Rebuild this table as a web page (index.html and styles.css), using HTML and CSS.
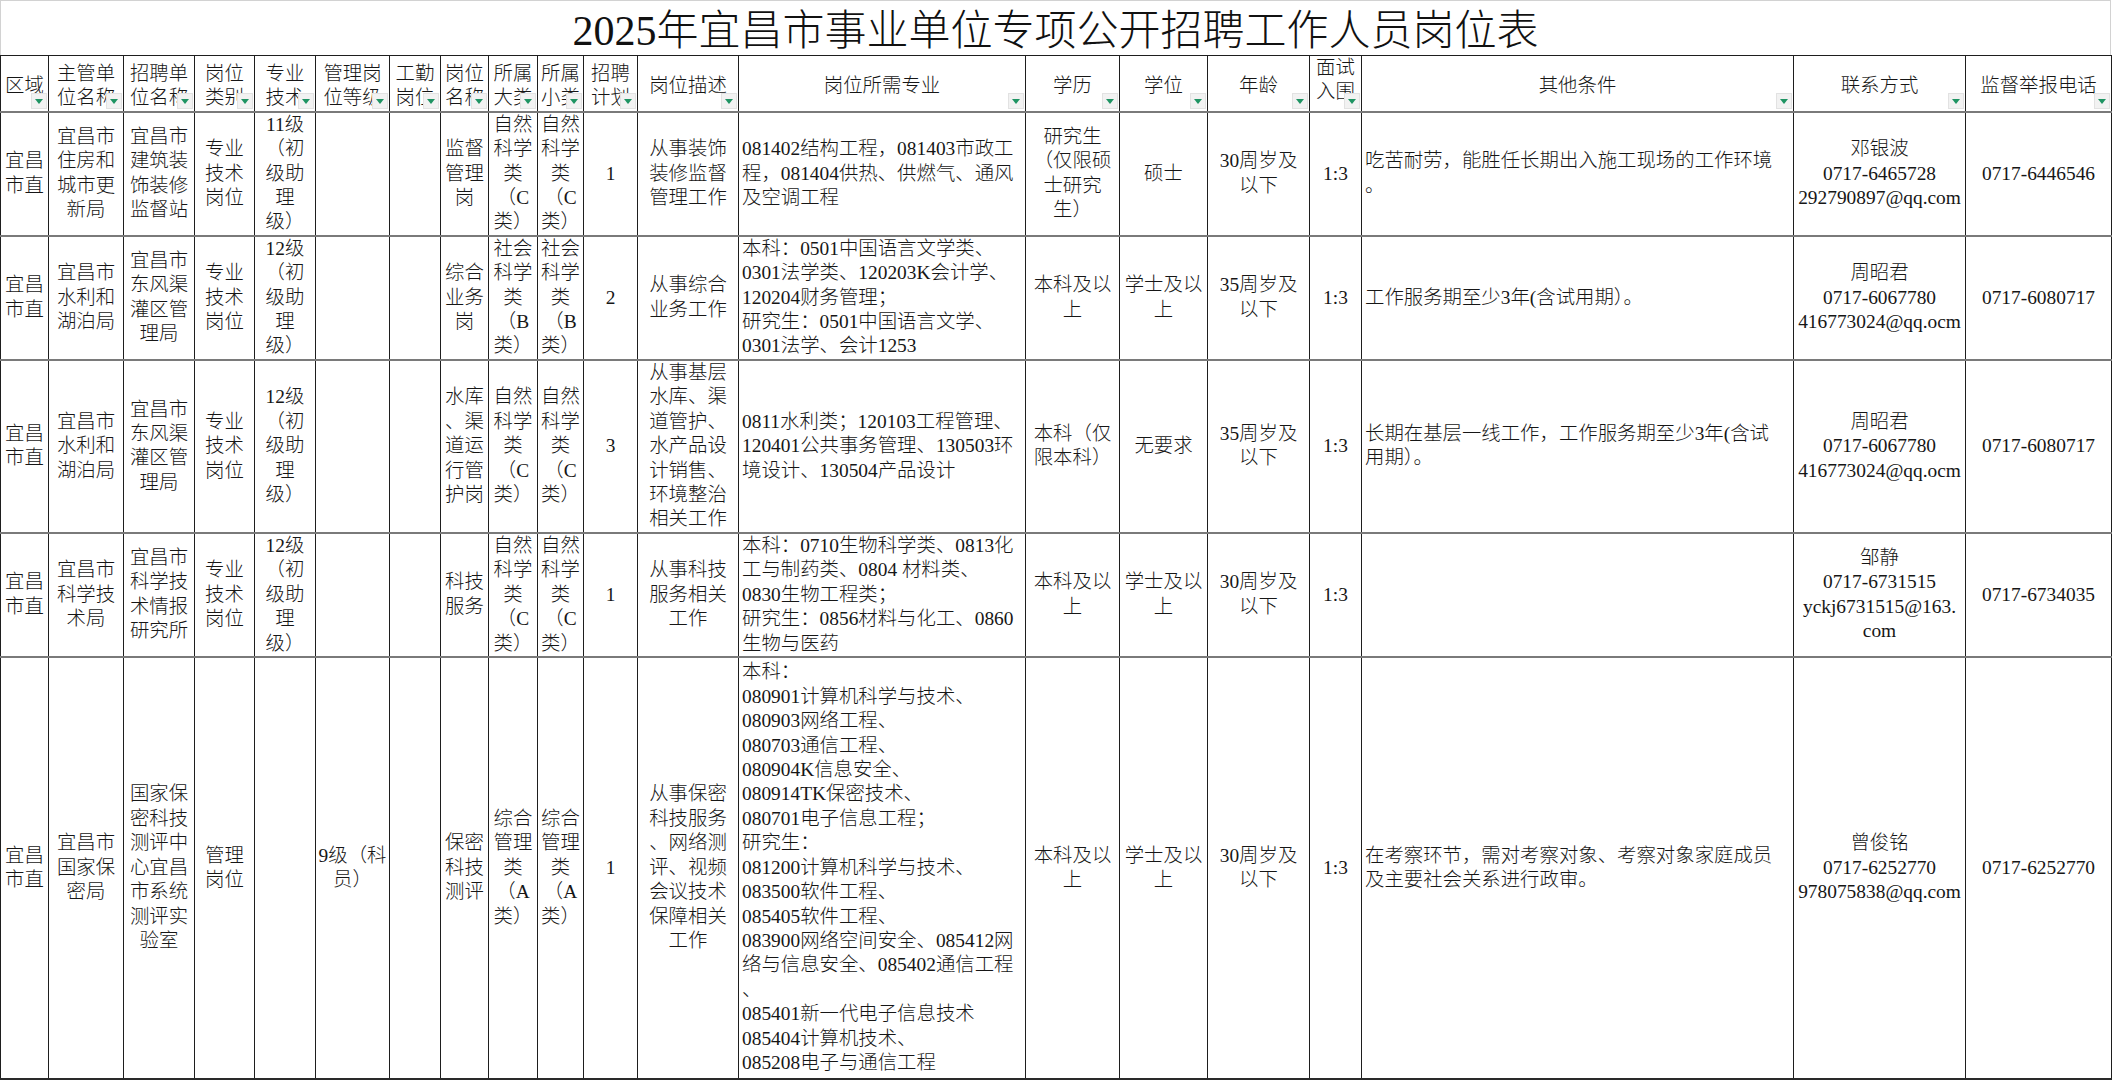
FILE: index.html
```html
<!DOCTYPE html>
<html lang="zh-CN">
<head>
<meta charset="utf-8">
<title>2025年宜昌市事业单位专项公开招聘工作人员岗位表</title>
<link rel="stylesheet" href="styles.css">
</head>
<body>
<div class="title">2025年宜昌市事业单位专项公开招聘工作人员岗位表</div>
<table class="sheet">
  <colgroup>
    <col class="w48"><col class="w75"><col class="w71"><col class="w60"><col class="w61">
    <col class="w74"><col class="w51"><col class="w48"><col class="w49"><col class="w46">
    <col class="w54"><col class="w101"><col class="w287"><col class="w94"><col class="w88">
    <col class="w102"><col class="w52"><col class="w432"><col class="w172"><col class="w146">
  </colgroup>
  <thead>
    <tr class="head">
      <th>区域<span class="fbtn"></span></th>
      <th>主管单<br>位名称<span class="fbtn"></span></th>
      <th>招聘单<br>位名称<span class="fbtn"></span></th>
      <th>岗位<br>类别<span class="fbtn"></span></th>
      <th>专业<br>技术<span class="fbtn"></span></th>
      <th>管理岗<br>位等级<span class="fbtn"></span></th>
      <th>工勤<br>岗位<span class="fbtn"></span></th>
      <th>岗位<br>名称<span class="fbtn"></span></th>
      <th>所属<br>大类<span class="fbtn"></span></th>
      <th>所属<br>小类<span class="fbtn"></span></th>
      <th>招聘<br>计划<span class="fbtn"></span></th>
      <th>岗位描述<span class="fbtn"></span></th>
      <th>岗位所需专业<span class="fbtn"></span></th>
      <th>学历<span class="fbtn"></span></th>
      <th>学位<span class="fbtn"></span></th>
      <th>年龄<span class="fbtn"></span></th>
      <th class="top">面试<br>入围<span class="fbtn"></span></th>
      <th>其他条件<span class="fbtn"></span></th>
      <th>联系方式<span class="fbtn"></span></th>
      <th>监督举报电话<span class="fbtn"></span></th>
    </tr>
  </thead>
  <tbody>
    <tr class="r1">
      <td>宜昌<br>市直</td>
      <td>宜昌市<br>住房和<br>城市更<br>新局</td>
      <td>宜昌市<br>建筑装<br>饰装修<br>监督站</td>
      <td>专业<br>技术<br>岗位</td>
      <td>11级<br>（初<br>级助<br>理<br>级）</td>
      <td></td>
      <td></td>
      <td>监督<br>管理<br>岗</td>
      <td>自然<br>科学<br>类<br>（C<br>类）</td>
      <td>自然<br>科学<br>类<br>（C<br>类）</td>
      <td>1</td>
      <td>从事装饰<br>装修监督<br>管理工作</td>
      <td class="left">081402结构工程，081403市政工<br>程，081404供热、供燃气、通风<br>及空调工程</td>
      <td>研究生<br>（仅限硕<br>士研究<br>生）</td>
      <td>硕士</td>
      <td>30周岁及<br>以下</td>
      <td>1:3</td>
      <td class="left">吃苦耐劳，能胜任长期出入施工现场的工作环境<br>。</td>
      <td>邓银波<br>0717-6465728<br>292790897@qq.com</td>
      <td>0717-6446546</td>
    </tr>
    <tr class="r2">
      <td>宜昌<br>市直</td>
      <td>宜昌市<br>水利和<br>湖泊局</td>
      <td>宜昌市<br>东风渠<br>灌区管<br>理局</td>
      <td>专业<br>技术<br>岗位</td>
      <td>12级<br>（初<br>级助<br>理<br>级）</td>
      <td></td>
      <td></td>
      <td>综合<br>业务<br>岗</td>
      <td>社会<br>科学<br>类<br>（B<br>类）</td>
      <td>社会<br>科学<br>类<br>（B<br>类）</td>
      <td>2</td>
      <td>从事综合<br>业务工作</td>
      <td class="left">本科：0501中国语言文学类、<br>0301法学类、120203K会计学、<br>120204财务管理；<br>研究生：0501中国语言文学、<br>0301法学、会计1253</td>
      <td>本科及以<br>上</td>
      <td>学士及以<br>上</td>
      <td>35周岁及<br>以下</td>
      <td>1:3</td>
      <td class="left">工作服务期至少3年(含试用期）。</td>
      <td>周昭君<br>0717-6067780<br>416773024@qq.ocm</td>
      <td>0717-6080717</td>
    </tr>
    <tr class="r3">
      <td>宜昌<br>市直</td>
      <td>宜昌市<br>水利和<br>湖泊局</td>
      <td>宜昌市<br>东风渠<br>灌区管<br>理局</td>
      <td>专业<br>技术<br>岗位</td>
      <td>12级<br>（初<br>级助<br>理<br>级）</td>
      <td></td>
      <td></td>
      <td>水库<br>、渠<br>道运<br>行管<br>护岗</td>
      <td>自然<br>科学<br>类<br>（C<br>类）</td>
      <td>自然<br>科学<br>类<br>（C<br>类）</td>
      <td>3</td>
      <td>从事基层<br>水库、渠<br>道管护、<br>水产品设<br>计销售、<br>环境整治<br>相关工作</td>
      <td class="left">0811水利类；120103工程管理、<br>120401公共事务管理、130503环<br>境设计、130504产品设计</td>
      <td>本科（仅<br>限本科）</td>
      <td>无要求</td>
      <td>35周岁及<br>以下</td>
      <td>1:3</td>
      <td class="left">长期在基层一线工作，工作服务期至少3年(含试<br>用期）。</td>
      <td>周昭君<br>0717-6067780<br>416773024@qq.ocm</td>
      <td>0717-6080717</td>
    </tr>
    <tr class="r4">
      <td>宜昌<br>市直</td>
      <td>宜昌市<br>科学技<br>术局</td>
      <td>宜昌市<br>科学技<br>术情报<br>研究所</td>
      <td>专业<br>技术<br>岗位</td>
      <td>12级<br>（初<br>级助<br>理<br>级）</td>
      <td></td>
      <td></td>
      <td>科技<br>服务</td>
      <td>自然<br>科学<br>类<br>（C<br>类）</td>
      <td>自然<br>科学<br>类<br>（C<br>类）</td>
      <td>1</td>
      <td>从事科技<br>服务相关<br>工作</td>
      <td class="left">本科：0710生物科学类、0813化<br>工与制药类、0804 材料类、<br>0830生物工程类；<br>研究生：0856材料与化工、0860<br>生物与医药</td>
      <td>本科及以<br>上</td>
      <td>学士及以<br>上</td>
      <td>30周岁及<br>以下</td>
      <td>1:3</td>
      <td class="left"></td>
      <td>邹静<br>0717-6731515<br>yckj6731515@163.<br>com</td>
      <td>0717-6734035</td>
    </tr>
    <tr class="r5">
      <td>宜昌<br>市直</td>
      <td>宜昌市<br>国家保<br>密局</td>
      <td>国家保<br>密科技<br>测评中<br>心宜昌<br>市系统<br>测评实<br>验室</td>
      <td>管理<br>岗位</td>
      <td></td>
      <td>9级（科<br>员）</td>
      <td></td>
      <td>保密<br>科技<br>测评</td>
      <td>综合<br>管理<br>类<br>（A<br>类）</td>
      <td>综合<br>管理<br>类<br>（A<br>类）</td>
      <td>1</td>
      <td>从事保密<br>科技服务<br>、网络测<br>评、视频<br>会议技术<br>保障相关<br>工作</td>
      <td class="left">本科：<br>080901计算机科学与技术、<br>080903网络工程、<br>080703通信工程、<br>080904K信息安全、<br>080914TK保密技术、<br>080701电子信息工程；<br>研究生：<br>081200计算机科学与技术、<br>083500软件工程、<br>085405软件工程、<br>083900网络空间安全、085412网<br>络与信息安全、085402通信工程<br>、<br>085401新一代电子信息技术<br>085404计算机技术、<br>085208电子与通信工程</td>
      <td>本科及以<br>上</td>
      <td>学士及以<br>上</td>
      <td>30周岁及<br>以下</td>
      <td>1:3</td>
      <td class="left">在考察环节，需对考察对象、考察对象家庭成员<br>及主要社会关系进行政审。</td>
      <td>曾俊铭<br>0717-6252770<br>978075838@qq.com</td>
      <td>0717-6252770</td>
    </tr>
  </tbody>
</table>
</body>
</html>
```

FILE: styles.css
```css
html, body {
  margin: 0;
  padding: 0;
  background: #ffffff;
}

body {
  font-family: "Liberation Serif", "Noto Sans CJK SC", serif;
  color: #161616;
}

.title {
  box-sizing: border-box;
  width: 2111px;
  height: 55px;
  border: 1px solid #d2d2d2;
  border-bottom: none;
  display: flex;
  align-items: center;
  justify-content: center;
  padding-top: 5px;
  font-size: 42px;
  font-weight: 300;
  line-height: 1;
  color: #111;
}

.sheet {
  border-collapse: collapse;
  table-layout: fixed;
  width: 2111px;
  font-size: 19.4px;
  line-height: 24.4px;
  font-weight: 300;
}

.sheet th,
.sheet td {
  border-left: 1px solid #1e1e1e;
  border-right: 1px solid #1e1e1e;
  border-top: 2px solid #7a7a7a;
  border-bottom: 2px solid #7a7a7a;
  padding: 0 2px;
  text-align: center;
  vertical-align: middle;
  white-space: nowrap;
  overflow: hidden;
  font-weight: 300;
}

.sheet th {
  position: relative;
  height: 48px;
  padding-top: 5px;
  border-top: 1px solid #1e1e1e;
}

.sheet th.top {
  padding-top: 0;
  padding-bottom: 6px;
}

.sheet td.left {
  text-align: left;
  padding-left: 3px;
}

.r1 td { height: 120px; }
.r2 td { height: 120px; }
.r3 td { height: 171px; }
.r4 td { height: 119px; }
.r5 td { height: 420px; }

.r5 td { border-bottom: 2px solid #2a2a2a; }

.fbtn {
  position: absolute;
  right: 1px;
  bottom: 2px;
  width: 16px;
  height: 16px;
  box-sizing: border-box;
  background: #f2f2f2;
  border: 1px solid #e2e2e2;
  display: flex;
  align-items: center;
  justify-content: center;
}

.fbtn::after {
  content: "";
  width: 0;
  height: 0;
  border-left: 4px solid transparent;
  border-right: 4px solid transparent;
  border-top: 5px solid #1f9463;
  margin-top: 2px;
}

.w48 { width: 48px; }
.w75 { width: 75px; }
.w71 { width: 71px; }
.w60 { width: 60px; }
.w61 { width: 61px; }
.w74 { width: 74px; }
.w51 { width: 51px; }
.w49 { width: 49px; }
.w46 { width: 46px; }
.w54 { width: 54px; }
.w101 { width: 101px; }
.w287 { width: 287px; }
.w94 { width: 94px; }
.w88 { width: 88px; }
.w102 { width: 102px; }
.w52 { width: 52px; }
.w432 { width: 432px; }
.w172 { width: 172px; }
.w146 { width: 146px; }
```
